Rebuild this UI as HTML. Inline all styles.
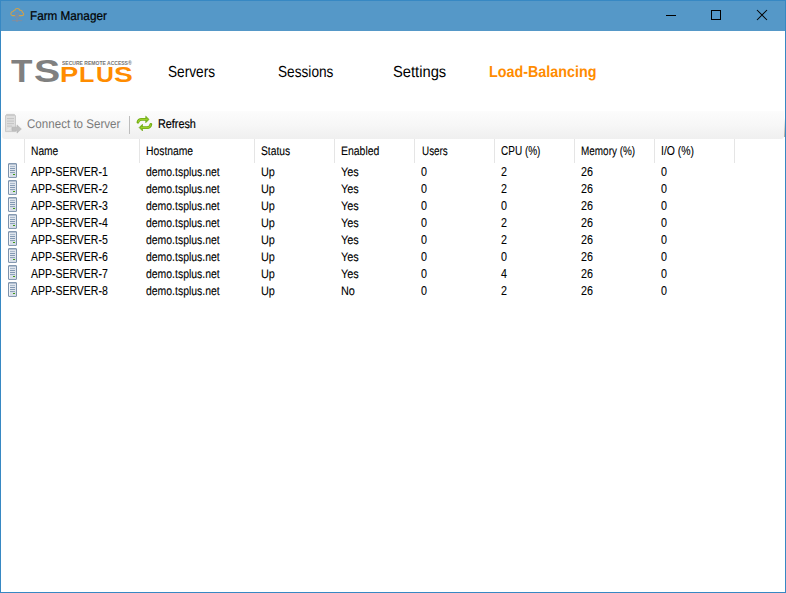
<!DOCTYPE html>
<html lang="en">
<head>
<meta charset="utf-8">
<title>Farm Manager</title>
<style>
html,body{margin:0;padding:0;}
body{width:786px;height:593px;overflow:hidden;background:#fff;font-family:"Liberation Sans",sans-serif;position:relative;}
#win{position:absolute;left:0;top:0;width:786px;height:593px;background:#fff;overflow:hidden;}
#titlebar{position:absolute;left:0;top:0;width:786px;height:31px;background:#5598c8;}
.bd{position:absolute;background:#3788c3;}
.t,.logo span{position:absolute;white-space:nowrap;transform-origin:0 0;line-height:1;color:#000;}
.logo span{display:block;}
#toolbar{position:absolute;left:2px;top:111px;width:782px;height:28px;border-radius:0 0 3px 3px;background:linear-gradient(#fcfcfc,#f7f7f7 50%,#efefef);}
.sep{position:absolute;width:1px;background:#e5e5e5;top:139px;height:24px;}
.tsep{position:absolute;left:129px;top:116px;width:1px;height:18px;background:#bdbdbd;}
svg{position:absolute;overflow:visible;display:block;}
</style>
</head>
<body>
<div id="win">
<div id="titlebar"></div>
<div class="titlebar-content">
<svg style="left:8px;top:6px" width="18" height="18" viewBox="8 6 18 18"><g fill="none" stroke-linecap="round" stroke-linejoin="round">
<path d="M12.6 15.6 C10.2 15.6 10.1 11.6 13.2 11.4 C13.4 10.6 14 10.2 14.8 10.3 C15.4 7.9 19.3 7.9 19.9 10.4 C21.6 9.9 22.6 11.3 22.3 12.4 C24.3 12.7 24.3 15.6 22 15.6 L19.2 15.6 M14.8 15.6 L12.6 15.6" stroke="#e7a233" stroke-width="1.05" opacity="0.85"/>
<g stroke="#8c8d96" stroke-width="1" opacity="0.8">
<rect x="15.4" y="12.6" width="3.2" height="5.4" rx="0.4"/>
<path d="M15.6 14.6H18.4M15.6 16.4H18.4M17 18.2V21.6M12.4 20.6H21.8"/>
</g>
<circle cx="17" cy="21" r="0.9" fill="#8c8d96" opacity="0.85"/>
</g></svg>
<div class="t" style="left:30.3px;top:10.03px;font-size:12.6px;transform:scaleX(0.9300);text-rendering:geometricPrecision;-webkit-text-stroke:0.22px #000;">Farm Manager</div>
<svg style="left:662px;top:8px" width="18" height="16" viewBox="662 8 18 16"><path d="M666 15.5H676" stroke="#000" fill="none" shape-rendering="crispEdges"/></svg>
<svg style="left:707px;top:8px" width="18" height="16" viewBox="707 8 18 16"><rect x="711.5" y="10.5" width="9" height="9" stroke="#000" fill="none" shape-rendering="crispEdges"/></svg>
<svg style="left:753px;top:8px" width="18" height="16" viewBox="753 8 18 16"><path d="M757 10L767 20M767 10L757 20" stroke="#000" stroke-width="1.05" fill="none"/></svg>
</div>
<div class="brand">
<div class="logo"><span style="left:11.2px;top:55.89px;font-size:32.5px;transform:scale(1.0799,0.9767);color:#808080;font-weight:bold;">T</span><span style="left:33.96px;top:55.89px;font-size:32.5px;transform:scale(1.2078,0.9759);color:#808080;font-weight:bold;">S</span></div>
<div class="logo"><span style="left:60.21px;top:64.4px;font-size:22.2px;transform:scale(1.2341,1.0095);color:#ff8c00;font-weight:bold;">P</span><span style="left:79.2px;top:64.33px;font-size:22.2px;transform:scale(1.1307,0.9956);color:#ff8c00;font-weight:bold;">L</span><span style="left:95.64px;top:64.33px;font-size:22.2px;transform:scale(1.1174,0.9956);color:#ff8c00;font-weight:bold;">U</span><span style="left:114.33px;top:64.89px;font-size:22.2px;transform:scale(1.2695,0.9683);color:#ff8c00;font-weight:bold;">S</span></div>
<div class="t" style="left:62px;top:61px;font-size:5.2px;font-weight:bold;color:#747474;transform:scaleX(0.968)">SECURE REMOTE ACCESS®</div>
</div>
<nav class="tabs">
<div class="t" style="left:167.78px;top:65.06px;font-size:16px;transform:scaleX(0.8546);text-rendering:geometricPrecision;">Servers</div>
<div class="t" style="left:277.62px;top:65.06px;font-size:16px;transform:scaleX(0.8534);text-rendering:geometricPrecision;">Sessions</div>
<div class="t" style="left:392.62px;top:65.06px;font-size:16px;transform:scaleX(0.9207);text-rendering:geometricPrecision;">Settings</div>
<div class="t" style="left:488.98px;top:65.06px;font-size:16px;transform:scaleX(0.8959);color:#ff8c00;font-weight:bold;text-rendering:geometricPrecision;">Load-Balancing</div>
</nav>
<div id="toolbar"></div>
<div class="toolbar-content">
<svg style="left:4px;top:113px" width="19" height="21" viewBox="4 113 19 21"><g opacity="0.95">
<path d="M6.6 114.4H14.4L15.5 115.8V131.6H5.5V115.8Z" fill="#dddddd" stroke="#c4c4c4" stroke-width="0.9"/>
<path d="M6.6 114.6H14.4L15.2 115.9H5.8Z" fill="#c9c9c9"/>
<path d="M7 118.6H14M7 121.1H14M7 123.6H14M7 126.1H12" stroke="#c2c2c2" stroke-width="1"/>
<path d="M12 127.2H17V124.9L21.3 129L17 133.1V130.8H12Z" fill="#bdbdbd" stroke="#b0b0b0" stroke-width="0.6" stroke-linejoin="round"/>
<path d="M7.5 129.6L10.5 128.4" stroke="#ececec" stroke-width="0.9"/>
</g></svg>
<div class="t" style="left:26.79px;top:118.03px;font-size:12.6px;transform:scaleX(0.9204);color:#7a7a7a;text-rendering:geometricPrecision;">Connect to Server</div>
<div class="tsep"></div>
<svg style="left:135px;top:114px" width="19" height="19" viewBox="135 114 19 19"><g stroke-linejoin="round" stroke-linecap="round">
<path d="M137.9 122.3C138.3 120.4 139.6 119.4 141.6 119.4H146" fill="none" stroke="#6fa913" stroke-width="2.7"/>
<path d="M146 116.5L149 119.4L146 122.4Z" fill="#7cb81c" stroke="#6fa913" stroke-width="0.8"/>
<path d="M138.2 122C138.6 120.6 139.8 119.5 141.6 119.4H147" fill="none" stroke="#9bd02a" stroke-width="1.2"/>
<path d="M150.9 124.3C150.5 126.5 149.2 127.6 147.2 127.6H142" fill="none" stroke="#6fa913" stroke-width="2.7"/>
<path d="M142.2 124.6L139.2 127.6L142.2 130.6Z" fill="#7cb81c" stroke="#6fa913" stroke-width="0.8"/>
<path d="M150.6 124.8C150.2 126.4 149 127.5 147.2 127.6H141.4" fill="none" stroke="#9bd02a" stroke-width="1.2"/>
</g></svg>
<div class="t" style="left:157.59px;top:118.03px;font-size:12.6px;transform:scaleX(0.8591);text-rendering:geometricPrecision;-webkit-text-stroke:0.2px #000;">Refresh</div>
<div style="position:absolute;left:784px;top:118px;width:1px;height:19px;background:linear-gradient(rgba(190,170,155,0),rgba(170,160,152,0.9))"></div>
</div>
<div class="list">
<div class="list-header">
<div class="sep" style="left:24px"></div>
<div class="sep" style="left:139px"></div>
<div class="sep" style="left:254px"></div>
<div class="sep" style="left:334px"></div>
<div class="sep" style="left:414px"></div>
<div class="sep" style="left:494px"></div>
<div class="sep" style="left:574px"></div>
<div class="sep" style="left:654px"></div>
<div class="sep" style="left:734px"></div>
<div class="t" style="left:30.84px;top:145.0px;font-size:12.4px;transform:scaleX(0.8254);text-rendering:geometricPrecision;-webkit-text-stroke:0.1px #000;">Name</div>
<div class="t" style="left:145.83px;top:145.0px;font-size:12.4px;transform:scaleX(0.8340);text-rendering:geometricPrecision;-webkit-text-stroke:0.1px #000;">Hostname</div>
<div class="t" style="left:260.86px;top:145.0px;font-size:12.4px;transform:scaleX(0.8310);text-rendering:geometricPrecision;-webkit-text-stroke:0.1px #000;">Status</div>
<div class="t" style="left:340.78px;top:145.0px;font-size:12.4px;transform:scaleX(0.8446);text-rendering:geometricPrecision;-webkit-text-stroke:0.1px #000;">Enabled</div>
<div class="t" style="left:421.62px;top:145.0px;font-size:12.4px;transform:scaleX(0.7977);text-rendering:geometricPrecision;-webkit-text-stroke:0.1px #000;">Users</div>
<div class="t" style="left:500.62px;top:145.07px;font-size:12.2px;transform:scaleX(0.8200);-webkit-text-stroke:0.1px #000;">CPU (%)</div>
<div class="t" style="left:580.81px;top:145.0px;font-size:12.4px;transform:scaleX(0.8027);text-rendering:geometricPrecision;-webkit-text-stroke:0.1px #000;">Memory (%)</div>
<div class="t" style="left:660.65px;top:145.07px;font-size:12.2px;transform:scaleX(0.8572);-webkit-text-stroke:0.1px #000;">I/O (%)</div>
</div>
<div class="list-row">
<svg style="left:8px;top:163px" width="9" height="15" viewBox="8 163 9 15"><g transform="translate(8,163)" shape-rendering="crispEdges"><rect x="0" y="0" width="9" height="15" fill="#b7c3d1"/><rect x="0" y="1" width="9" height="13" fill="#7d92ab"/><rect x="1" y="0" width="7" height="15" fill="#8599b1"/><rect x="1" y="1" width="7" height="13" fill="#dfe5ed"/><rect x="1" y="1" width="7" height="1" fill="#b4c1d1"/><rect x="1" y="2" width="1" height="11" fill="#f3f5f8"/><rect x="2" y="3" width="5" height="1" fill="#a9b9cb"/><rect x="2" y="5" width="5" height="1" fill="#8399b3"/><rect x="2" y="7" width="5" height="1" fill="#8399b3"/><rect x="2" y="9" width="5" height="1" fill="#8ea2ba"/><rect x="2" y="10" width="6" height="4" fill="#d6dde7"/><rect x="5" y="11" width="2" height="1" fill="#3d9a14"/></g></svg>
<div class="t" style="left:30.9px;top:166.07px;font-size:12.2px;transform:scaleX(0.8609);-webkit-text-stroke:0.1px #000;">APP-SERVER-1</div>
<div class="t" style="left:145.79px;top:166.0px;font-size:12.4px;transform:scaleX(0.8424);text-rendering:geometricPrecision;-webkit-text-stroke:0.1px #000;">demo.tsplus.net</div>
<div class="t" style="left:261.47px;top:166.0px;font-size:12.4px;transform:scaleX(0.8800);text-rendering:geometricPrecision;-webkit-text-stroke:0.1px #000;">Up</div>
<div class="t" style="left:340.86px;top:166.0px;font-size:12.4px;transform:scaleX(0.8800);text-rendering:geometricPrecision;-webkit-text-stroke:0.1px #000;">Yes</div>
<div class="t" style="left:421.22px;top:166.07px;font-size:12.2px;transform:scaleX(0.8800);-webkit-text-stroke:0.1px #000;">0</div>
<div class="t" style="left:501.22px;top:166.07px;font-size:12.2px;transform:scaleX(0.8800);-webkit-text-stroke:0.1px #000;">2</div>
<div class="t" style="left:581.22px;top:166.07px;font-size:12.2px;transform:scaleX(0.8800);-webkit-text-stroke:0.1px #000;">26</div>
<div class="t" style="left:661.22px;top:166.07px;font-size:12.2px;transform:scaleX(0.8800);-webkit-text-stroke:0.1px #000;">0</div>
</div>
<div class="list-row">
<svg style="left:8px;top:180px" width="9" height="15" viewBox="8 180 9 15"><g transform="translate(8,180)" shape-rendering="crispEdges"><rect x="0" y="0" width="9" height="15" fill="#b7c3d1"/><rect x="0" y="1" width="9" height="13" fill="#7d92ab"/><rect x="1" y="0" width="7" height="15" fill="#8599b1"/><rect x="1" y="1" width="7" height="13" fill="#dfe5ed"/><rect x="1" y="1" width="7" height="1" fill="#b4c1d1"/><rect x="1" y="2" width="1" height="11" fill="#f3f5f8"/><rect x="2" y="3" width="5" height="1" fill="#a9b9cb"/><rect x="2" y="5" width="5" height="1" fill="#8399b3"/><rect x="2" y="7" width="5" height="1" fill="#8399b3"/><rect x="2" y="9" width="5" height="1" fill="#8ea2ba"/><rect x="2" y="10" width="6" height="4" fill="#d6dde7"/><rect x="5" y="11" width="2" height="1" fill="#3d9a14"/></g></svg>
<div class="t" style="left:30.9px;top:183.07px;font-size:12.2px;transform:scaleX(0.8609);-webkit-text-stroke:0.1px #000;">APP-SERVER-2</div>
<div class="t" style="left:145.79px;top:183.0px;font-size:12.4px;transform:scaleX(0.8424);text-rendering:geometricPrecision;-webkit-text-stroke:0.1px #000;">demo.tsplus.net</div>
<div class="t" style="left:261.47px;top:183.0px;font-size:12.4px;transform:scaleX(0.8800);text-rendering:geometricPrecision;-webkit-text-stroke:0.1px #000;">Up</div>
<div class="t" style="left:340.86px;top:183.0px;font-size:12.4px;transform:scaleX(0.8800);text-rendering:geometricPrecision;-webkit-text-stroke:0.1px #000;">Yes</div>
<div class="t" style="left:421.22px;top:183.07px;font-size:12.2px;transform:scaleX(0.8800);-webkit-text-stroke:0.1px #000;">0</div>
<div class="t" style="left:501.22px;top:183.07px;font-size:12.2px;transform:scaleX(0.8800);-webkit-text-stroke:0.1px #000;">2</div>
<div class="t" style="left:581.22px;top:183.07px;font-size:12.2px;transform:scaleX(0.8800);-webkit-text-stroke:0.1px #000;">26</div>
<div class="t" style="left:661.22px;top:183.07px;font-size:12.2px;transform:scaleX(0.8800);-webkit-text-stroke:0.1px #000;">0</div>
</div>
<div class="list-row">
<svg style="left:8px;top:197px" width="9" height="15" viewBox="8 197 9 15"><g transform="translate(8,197)" shape-rendering="crispEdges"><rect x="0" y="0" width="9" height="15" fill="#b7c3d1"/><rect x="0" y="1" width="9" height="13" fill="#7d92ab"/><rect x="1" y="0" width="7" height="15" fill="#8599b1"/><rect x="1" y="1" width="7" height="13" fill="#dfe5ed"/><rect x="1" y="1" width="7" height="1" fill="#b4c1d1"/><rect x="1" y="2" width="1" height="11" fill="#f3f5f8"/><rect x="2" y="3" width="5" height="1" fill="#a9b9cb"/><rect x="2" y="5" width="5" height="1" fill="#8399b3"/><rect x="2" y="7" width="5" height="1" fill="#8399b3"/><rect x="2" y="9" width="5" height="1" fill="#8ea2ba"/><rect x="2" y="10" width="6" height="4" fill="#d6dde7"/><rect x="5" y="11" width="2" height="1" fill="#3d9a14"/></g></svg>
<div class="t" style="left:30.9px;top:200.07px;font-size:12.2px;transform:scaleX(0.8609);-webkit-text-stroke:0.1px #000;">APP-SERVER-3</div>
<div class="t" style="left:145.79px;top:200.0px;font-size:12.4px;transform:scaleX(0.8424);text-rendering:geometricPrecision;-webkit-text-stroke:0.1px #000;">demo.tsplus.net</div>
<div class="t" style="left:261.47px;top:200.0px;font-size:12.4px;transform:scaleX(0.8800);text-rendering:geometricPrecision;-webkit-text-stroke:0.1px #000;">Up</div>
<div class="t" style="left:340.86px;top:200.0px;font-size:12.4px;transform:scaleX(0.8800);text-rendering:geometricPrecision;-webkit-text-stroke:0.1px #000;">Yes</div>
<div class="t" style="left:421.22px;top:200.07px;font-size:12.2px;transform:scaleX(0.8800);-webkit-text-stroke:0.1px #000;">0</div>
<div class="t" style="left:501.22px;top:200.07px;font-size:12.2px;transform:scaleX(0.8800);-webkit-text-stroke:0.1px #000;">0</div>
<div class="t" style="left:581.22px;top:200.07px;font-size:12.2px;transform:scaleX(0.8800);-webkit-text-stroke:0.1px #000;">26</div>
<div class="t" style="left:661.22px;top:200.07px;font-size:12.2px;transform:scaleX(0.8800);-webkit-text-stroke:0.1px #000;">0</div>
</div>
<div class="list-row">
<svg style="left:8px;top:214px" width="9" height="15" viewBox="8 214 9 15"><g transform="translate(8,214)" shape-rendering="crispEdges"><rect x="0" y="0" width="9" height="15" fill="#b7c3d1"/><rect x="0" y="1" width="9" height="13" fill="#7d92ab"/><rect x="1" y="0" width="7" height="15" fill="#8599b1"/><rect x="1" y="1" width="7" height="13" fill="#dfe5ed"/><rect x="1" y="1" width="7" height="1" fill="#b4c1d1"/><rect x="1" y="2" width="1" height="11" fill="#f3f5f8"/><rect x="2" y="3" width="5" height="1" fill="#a9b9cb"/><rect x="2" y="5" width="5" height="1" fill="#8399b3"/><rect x="2" y="7" width="5" height="1" fill="#8399b3"/><rect x="2" y="9" width="5" height="1" fill="#8ea2ba"/><rect x="2" y="10" width="6" height="4" fill="#d6dde7"/><rect x="5" y="11" width="2" height="1" fill="#3d9a14"/></g></svg>
<div class="t" style="left:30.9px;top:217.07px;font-size:12.2px;transform:scaleX(0.8609);-webkit-text-stroke:0.1px #000;">APP-SERVER-4</div>
<div class="t" style="left:145.79px;top:217.0px;font-size:12.4px;transform:scaleX(0.8424);text-rendering:geometricPrecision;-webkit-text-stroke:0.1px #000;">demo.tsplus.net</div>
<div class="t" style="left:261.47px;top:217.0px;font-size:12.4px;transform:scaleX(0.8800);text-rendering:geometricPrecision;-webkit-text-stroke:0.1px #000;">Up</div>
<div class="t" style="left:340.86px;top:217.0px;font-size:12.4px;transform:scaleX(0.8800);text-rendering:geometricPrecision;-webkit-text-stroke:0.1px #000;">Yes</div>
<div class="t" style="left:421.22px;top:217.07px;font-size:12.2px;transform:scaleX(0.8800);-webkit-text-stroke:0.1px #000;">0</div>
<div class="t" style="left:501.22px;top:217.07px;font-size:12.2px;transform:scaleX(0.8800);-webkit-text-stroke:0.1px #000;">2</div>
<div class="t" style="left:581.22px;top:217.07px;font-size:12.2px;transform:scaleX(0.8800);-webkit-text-stroke:0.1px #000;">26</div>
<div class="t" style="left:661.22px;top:217.07px;font-size:12.2px;transform:scaleX(0.8800);-webkit-text-stroke:0.1px #000;">0</div>
</div>
<div class="list-row">
<svg style="left:8px;top:231px" width="9" height="15" viewBox="8 231 9 15"><g transform="translate(8,231)" shape-rendering="crispEdges"><rect x="0" y="0" width="9" height="15" fill="#b7c3d1"/><rect x="0" y="1" width="9" height="13" fill="#7d92ab"/><rect x="1" y="0" width="7" height="15" fill="#8599b1"/><rect x="1" y="1" width="7" height="13" fill="#dfe5ed"/><rect x="1" y="1" width="7" height="1" fill="#b4c1d1"/><rect x="1" y="2" width="1" height="11" fill="#f3f5f8"/><rect x="2" y="3" width="5" height="1" fill="#a9b9cb"/><rect x="2" y="5" width="5" height="1" fill="#8399b3"/><rect x="2" y="7" width="5" height="1" fill="#8399b3"/><rect x="2" y="9" width="5" height="1" fill="#8ea2ba"/><rect x="2" y="10" width="6" height="4" fill="#d6dde7"/><rect x="5" y="11" width="2" height="1" fill="#3d9a14"/></g></svg>
<div class="t" style="left:30.9px;top:234.07px;font-size:12.2px;transform:scaleX(0.8609);-webkit-text-stroke:0.1px #000;">APP-SERVER-5</div>
<div class="t" style="left:145.79px;top:234.0px;font-size:12.4px;transform:scaleX(0.8424);text-rendering:geometricPrecision;-webkit-text-stroke:0.1px #000;">demo.tsplus.net</div>
<div class="t" style="left:261.47px;top:234.0px;font-size:12.4px;transform:scaleX(0.8800);text-rendering:geometricPrecision;-webkit-text-stroke:0.1px #000;">Up</div>
<div class="t" style="left:340.86px;top:234.0px;font-size:12.4px;transform:scaleX(0.8800);text-rendering:geometricPrecision;-webkit-text-stroke:0.1px #000;">Yes</div>
<div class="t" style="left:421.22px;top:234.07px;font-size:12.2px;transform:scaleX(0.8800);-webkit-text-stroke:0.1px #000;">0</div>
<div class="t" style="left:501.22px;top:234.07px;font-size:12.2px;transform:scaleX(0.8800);-webkit-text-stroke:0.1px #000;">2</div>
<div class="t" style="left:581.22px;top:234.07px;font-size:12.2px;transform:scaleX(0.8800);-webkit-text-stroke:0.1px #000;">26</div>
<div class="t" style="left:661.22px;top:234.07px;font-size:12.2px;transform:scaleX(0.8800);-webkit-text-stroke:0.1px #000;">0</div>
</div>
<div class="list-row">
<svg style="left:8px;top:248px" width="9" height="15" viewBox="8 248 9 15"><g transform="translate(8,248)" shape-rendering="crispEdges"><rect x="0" y="0" width="9" height="15" fill="#b7c3d1"/><rect x="0" y="1" width="9" height="13" fill="#7d92ab"/><rect x="1" y="0" width="7" height="15" fill="#8599b1"/><rect x="1" y="1" width="7" height="13" fill="#dfe5ed"/><rect x="1" y="1" width="7" height="1" fill="#b4c1d1"/><rect x="1" y="2" width="1" height="11" fill="#f3f5f8"/><rect x="2" y="3" width="5" height="1" fill="#a9b9cb"/><rect x="2" y="5" width="5" height="1" fill="#8399b3"/><rect x="2" y="7" width="5" height="1" fill="#8399b3"/><rect x="2" y="9" width="5" height="1" fill="#8ea2ba"/><rect x="2" y="10" width="6" height="4" fill="#d6dde7"/><rect x="5" y="11" width="2" height="1" fill="#3d9a14"/></g></svg>
<div class="t" style="left:30.9px;top:251.07px;font-size:12.2px;transform:scaleX(0.8609);-webkit-text-stroke:0.1px #000;">APP-SERVER-6</div>
<div class="t" style="left:145.79px;top:251.0px;font-size:12.4px;transform:scaleX(0.8424);text-rendering:geometricPrecision;-webkit-text-stroke:0.1px #000;">demo.tsplus.net</div>
<div class="t" style="left:261.47px;top:251.0px;font-size:12.4px;transform:scaleX(0.8800);text-rendering:geometricPrecision;-webkit-text-stroke:0.1px #000;">Up</div>
<div class="t" style="left:340.86px;top:251.0px;font-size:12.4px;transform:scaleX(0.8800);text-rendering:geometricPrecision;-webkit-text-stroke:0.1px #000;">Yes</div>
<div class="t" style="left:421.22px;top:251.07px;font-size:12.2px;transform:scaleX(0.8800);-webkit-text-stroke:0.1px #000;">0</div>
<div class="t" style="left:501.22px;top:251.07px;font-size:12.2px;transform:scaleX(0.8800);-webkit-text-stroke:0.1px #000;">0</div>
<div class="t" style="left:581.22px;top:251.07px;font-size:12.2px;transform:scaleX(0.8800);-webkit-text-stroke:0.1px #000;">26</div>
<div class="t" style="left:661.22px;top:251.07px;font-size:12.2px;transform:scaleX(0.8800);-webkit-text-stroke:0.1px #000;">0</div>
</div>
<div class="list-row">
<svg style="left:8px;top:265px" width="9" height="15" viewBox="8 265 9 15"><g transform="translate(8,265)" shape-rendering="crispEdges"><rect x="0" y="0" width="9" height="15" fill="#b7c3d1"/><rect x="0" y="1" width="9" height="13" fill="#7d92ab"/><rect x="1" y="0" width="7" height="15" fill="#8599b1"/><rect x="1" y="1" width="7" height="13" fill="#dfe5ed"/><rect x="1" y="1" width="7" height="1" fill="#b4c1d1"/><rect x="1" y="2" width="1" height="11" fill="#f3f5f8"/><rect x="2" y="3" width="5" height="1" fill="#a9b9cb"/><rect x="2" y="5" width="5" height="1" fill="#8399b3"/><rect x="2" y="7" width="5" height="1" fill="#8399b3"/><rect x="2" y="9" width="5" height="1" fill="#8ea2ba"/><rect x="2" y="10" width="6" height="4" fill="#d6dde7"/><rect x="5" y="11" width="2" height="1" fill="#3d9a14"/></g></svg>
<div class="t" style="left:30.9px;top:268.07px;font-size:12.2px;transform:scaleX(0.8609);-webkit-text-stroke:0.1px #000;">APP-SERVER-7</div>
<div class="t" style="left:145.79px;top:268.0px;font-size:12.4px;transform:scaleX(0.8424);text-rendering:geometricPrecision;-webkit-text-stroke:0.1px #000;">demo.tsplus.net</div>
<div class="t" style="left:261.47px;top:268.0px;font-size:12.4px;transform:scaleX(0.8800);text-rendering:geometricPrecision;-webkit-text-stroke:0.1px #000;">Up</div>
<div class="t" style="left:340.86px;top:268.0px;font-size:12.4px;transform:scaleX(0.8800);text-rendering:geometricPrecision;-webkit-text-stroke:0.1px #000;">Yes</div>
<div class="t" style="left:421.22px;top:268.07px;font-size:12.2px;transform:scaleX(0.8800);-webkit-text-stroke:0.1px #000;">0</div>
<div class="t" style="left:501.22px;top:268.07px;font-size:12.2px;transform:scaleX(0.8800);-webkit-text-stroke:0.1px #000;">4</div>
<div class="t" style="left:581.22px;top:268.07px;font-size:12.2px;transform:scaleX(0.8800);-webkit-text-stroke:0.1px #000;">26</div>
<div class="t" style="left:661.22px;top:268.07px;font-size:12.2px;transform:scaleX(0.8800);-webkit-text-stroke:0.1px #000;">0</div>
</div>
<div class="list-row">
<svg style="left:8px;top:282px" width="9" height="15" viewBox="8 282 9 15"><g transform="translate(8,282)" shape-rendering="crispEdges"><rect x="0" y="0" width="9" height="15" fill="#b7c3d1"/><rect x="0" y="1" width="9" height="13" fill="#7d92ab"/><rect x="1" y="0" width="7" height="15" fill="#8599b1"/><rect x="1" y="1" width="7" height="13" fill="#dfe5ed"/><rect x="1" y="1" width="7" height="1" fill="#b4c1d1"/><rect x="1" y="2" width="1" height="11" fill="#f3f5f8"/><rect x="2" y="3" width="5" height="1" fill="#a9b9cb"/><rect x="2" y="5" width="5" height="1" fill="#8399b3"/><rect x="2" y="7" width="5" height="1" fill="#8399b3"/><rect x="2" y="9" width="5" height="1" fill="#8ea2ba"/><rect x="2" y="10" width="6" height="4" fill="#d6dde7"/><rect x="5" y="11" width="2" height="1" fill="#3d9a14"/></g></svg>
<div class="t" style="left:30.9px;top:285.07px;font-size:12.2px;transform:scaleX(0.8609);-webkit-text-stroke:0.1px #000;">APP-SERVER-8</div>
<div class="t" style="left:145.79px;top:285.0px;font-size:12.4px;transform:scaleX(0.8424);text-rendering:geometricPrecision;-webkit-text-stroke:0.1px #000;">demo.tsplus.net</div>
<div class="t" style="left:261.47px;top:285.0px;font-size:12.4px;transform:scaleX(0.8800);text-rendering:geometricPrecision;-webkit-text-stroke:0.1px #000;">Up</div>
<div class="t" style="left:340.78px;top:285.0px;font-size:12.4px;transform:scaleX(0.8800);text-rendering:geometricPrecision;-webkit-text-stroke:0.1px #000;">No</div>
<div class="t" style="left:421.22px;top:285.07px;font-size:12.2px;transform:scaleX(0.8800);-webkit-text-stroke:0.1px #000;">0</div>
<div class="t" style="left:501.22px;top:285.07px;font-size:12.2px;transform:scaleX(0.8800);-webkit-text-stroke:0.1px #000;">2</div>
<div class="t" style="left:581.22px;top:285.07px;font-size:12.2px;transform:scaleX(0.8800);-webkit-text-stroke:0.1px #000;">26</div>
<div class="t" style="left:661.22px;top:285.07px;font-size:12.2px;transform:scaleX(0.8800);-webkit-text-stroke:0.1px #000;">0</div>
</div>
</div>
<div class="bd" style="left:0;top:0;width:786px;height:1px"></div><div class="bd" style="left:0;top:592px;width:786px;height:1px"></div><div class="bd" style="left:0;top:0;width:1px;height:593px"></div><div class="bd" style="left:785px;top:0;width:1px;height:593px"></div>
</div>
</body>
</html>
